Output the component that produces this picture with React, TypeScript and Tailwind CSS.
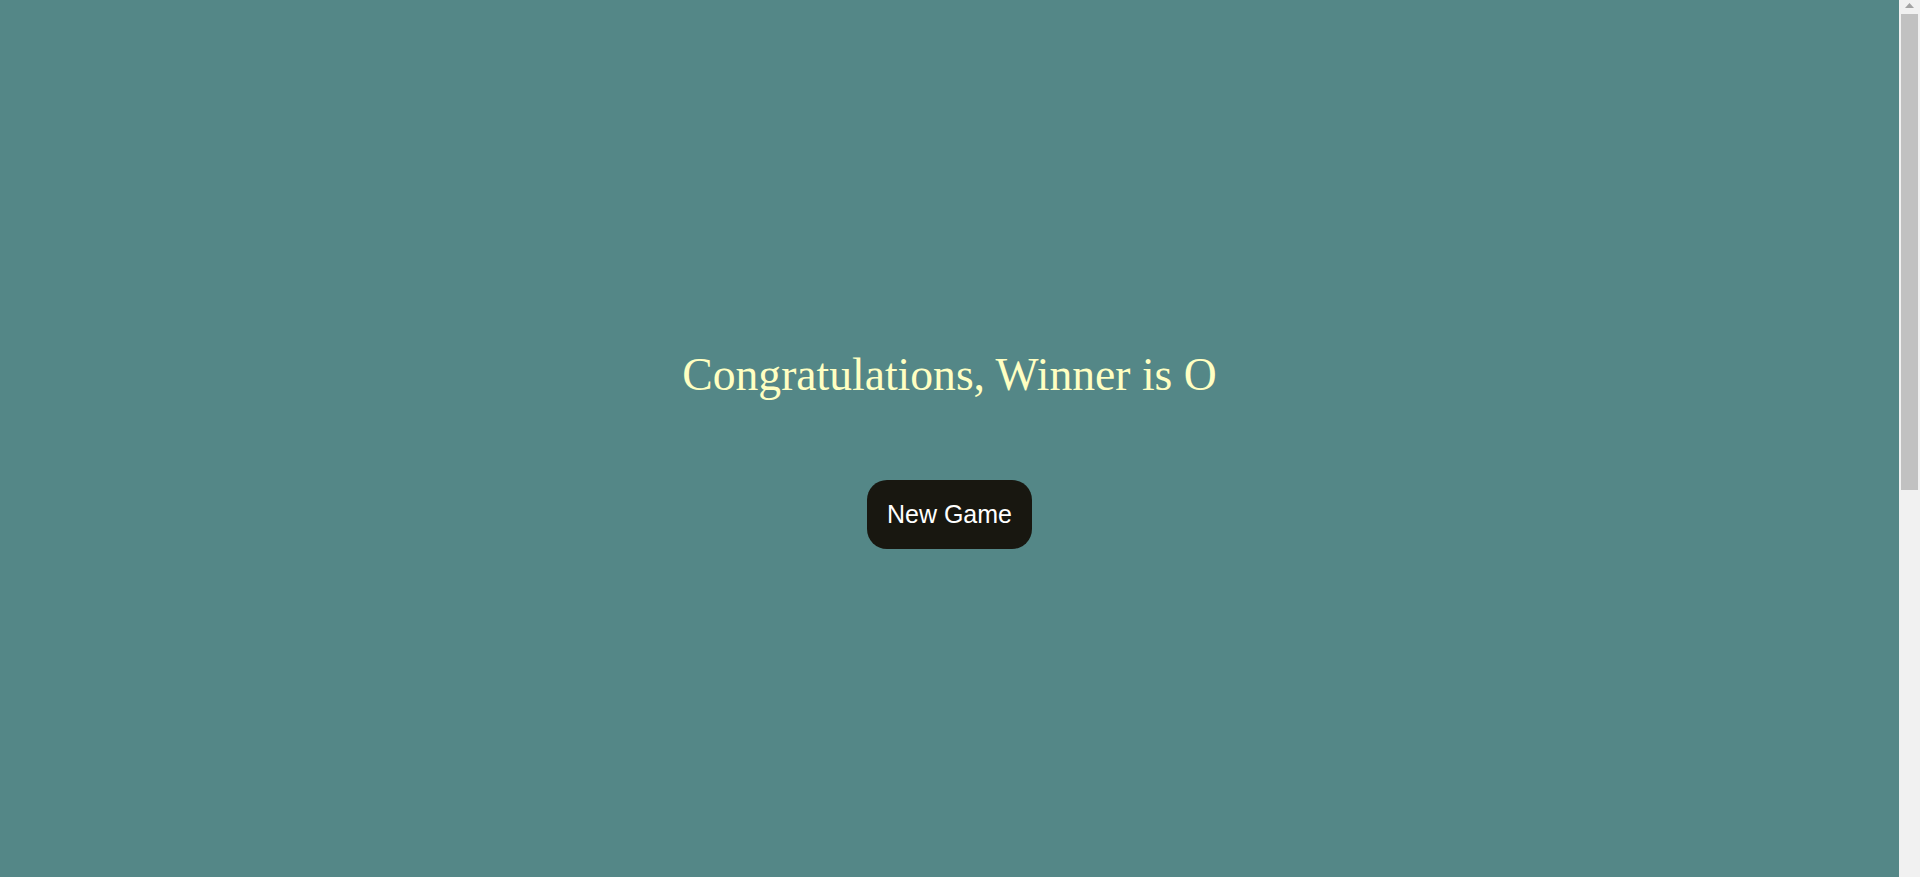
import React from "react";

export default function App() {
  return (
    <div className="flex h-[877px] w-full overflow-hidden bg-[#548787]">
      <main className="flex flex-1 flex-col items-center pt-[349px]">
        <h1
          className="m-0 text-[45.6px] font-normal leading-[1.15] text-[#ffffc2]"
          style={{ fontFamily: '"Liberation Serif", "Times New Roman", serif' }}
        >
          Congratulations, Winner is O
        </h1>
        <button
          className="mt-[79px] rounded-[20px] bg-[#181710] px-[20px] py-[20px] text-[25px] leading-[29px] text-white"
          style={{ fontFamily: '"Liberation Sans", Arial, sans-serif' }}
        >
          New Game
        </button>
      </main>
      <aside className="flex w-[21px] flex-col items-center bg-[#f1f1f1]">
        <svg width="9" height="14" viewBox="0 0 9 14" className="shrink-0">
          <polygon points="4.5,3 9,8 0,8" fill="#a3a3a3" />
        </svg>
        <div className="h-[476px] w-[17px] bg-[#c1c1c1]" />
      </aside>
    </div>
  );
}
